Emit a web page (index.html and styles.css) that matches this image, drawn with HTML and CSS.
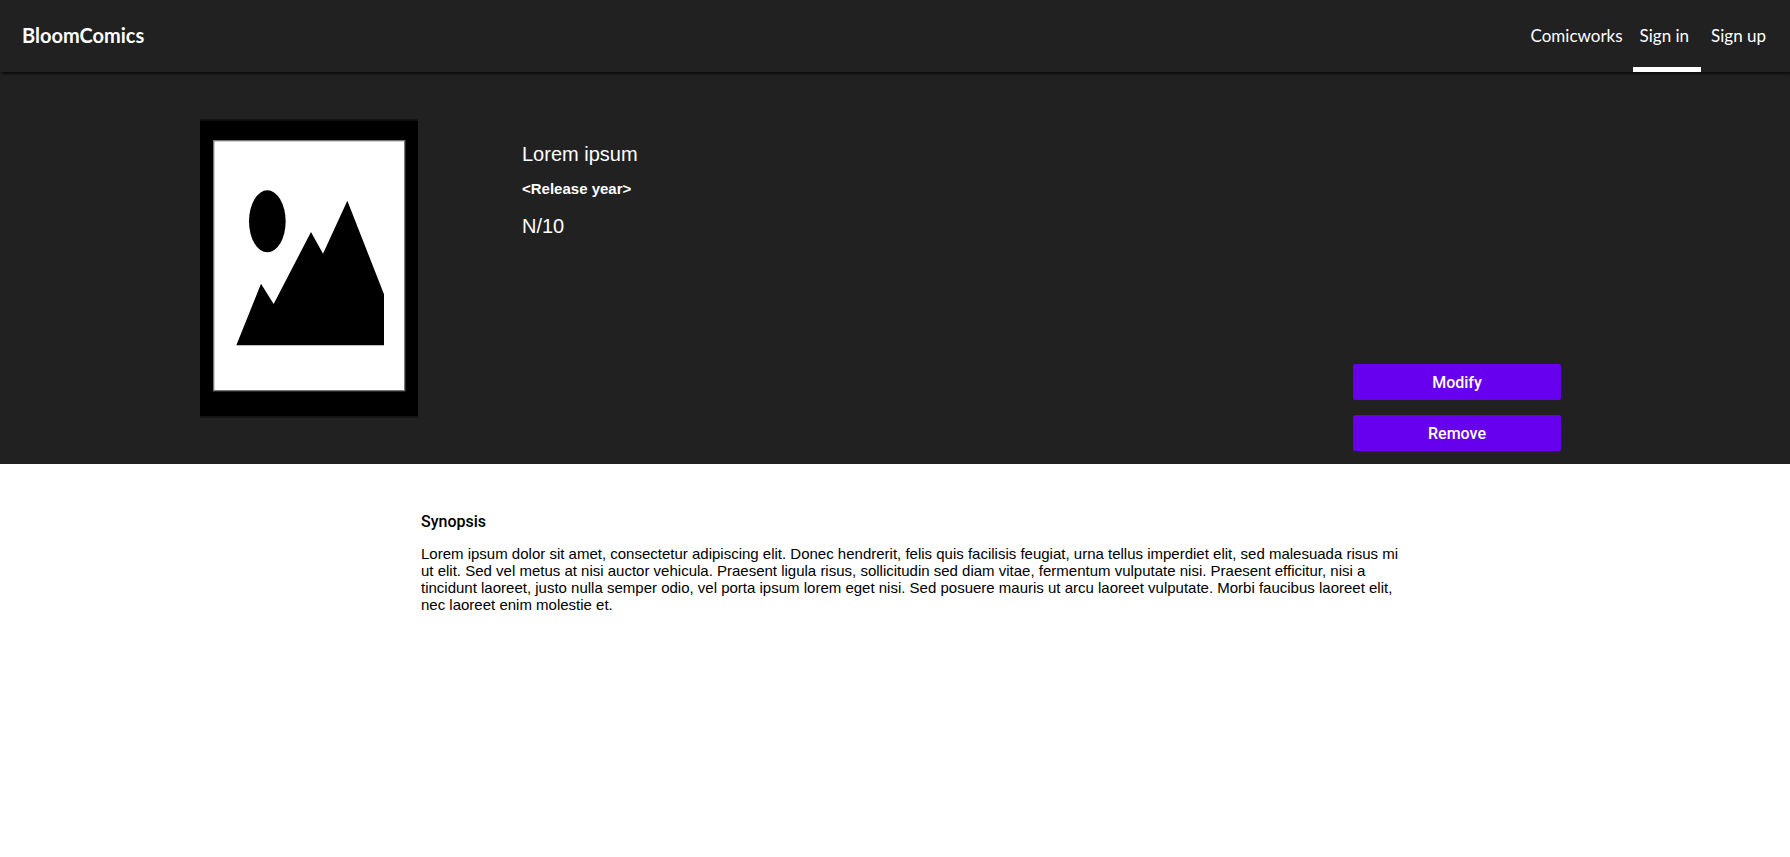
FILE: index.html
```html
<!DOCTYPE html>
<html lang="en">
<head>
<meta charset="utf-8">
<title>BloomComics</title>
<meta name="viewport" content="width=device-width, initial-scale=1">
<link rel="stylesheet" href="styles.css">
</head>
<body>
<header class="topbar">
  <a class="brand" href="#">BloomComics</a>
  <nav class="menu">
    <a class="menu-link" href="#">Comicworks</a>
    <a class="menu-link menu-link-active" href="#">Sign in</a>
    <a class="menu-link" href="#">Sign up</a>
  </nav>
</header>
<main>
  <section class="hero">
    <svg class="cover" viewBox="0 0 654 897" role="img" aria-label="Cover">
      <rect width="654" height="897" fill="#000" fill-opacity=".35"/>
      <rect y="5" width="654" height="886" fill="#000"/>
      <rect x="41" y="65" width="573" height="750" fill="#fff" stroke="#777" stroke-width="4"/>
      <ellipse cx="202" cy="307" rx="55" ry="93"/>
      <path d="M109 679 183 494 221 555 333 339 369 404 442 245 552 526V679Z"/>
    </svg>
    <div class="details">
      <h1 class="title">Lorem ipsum</h1>
      <p class="year">&lt;Release year&gt;</p>
      <p class="score">N/10</p>
    </div>
    <div class="actions">
      <button class="action" type="button">Modify</button>
      <button class="action" type="button">Remove</button>
    </div>
  </section>
  <section class="synopsis">
    <h2 class="synopsis-title">Synopsis</h2>
    <p class="synopsis-text">Lorem ipsum dolor sit amet, consectetur adipiscing elit. Donec hendrerit, felis quis facilisis feugiat, urna tellus imperdiet elit, sed malesuada risus mi ut elit. Sed vel metus at nisi auctor vehicula. Praesent ligula risus, sollicitudin sed diam vitae, fermentum vulputate nisi. Praesent efficitur, nisi a tincidunt laoreet, justo nulla semper odio, vel porta ipsum lorem eget nisi. Sed posuere mauris ut arcu laoreet vulputate. Morbi faucibus laoreet elit, nec laoreet enim molestie et.</p>
  </section>
</main>
</body>
</html>
```
FILE: styles.css
```css
* { box-sizing: border-box; }

body {
  margin: 0;
  background: #fff;
  color: #000;
  font-family: "Liberation Sans", Arial, sans-serif;
}

h1, h2, p { margin: 0; }

.topbar {
  position: relative;
  display: flex;
  justify-content: space-between;
  min-height: 72px;
  padding: 0 17px 0 22px;
  background: #212121;
  box-shadow: 2px 2px 3px rgba(0, 0, 0, .7);
  font-family: Lato, sans-serif;
}

.brand {
  align-self: center;
  padding-bottom: 2px;
  color: #fff;
  font-size: 20px;
  font-weight: 700;
  text-decoration: none;
}

.menu {
  display: flex;
  gap: 3px;
}

.menu-link {
  display: flex;
  align-items: center;
  padding: 4px 7px 0;
  border-bottom: 5px solid transparent;
  color: #fff;
  font-size: 17px;
  text-decoration: none;
}

.menu-link-active {
  padding-right: 12px;
  border-bottom-color: #fff;
}

.hero {
  display: flex;
  padding: 47px 229px 13px 200px;
  background: #212121;
  color: #fff;
}

.cover {
  width: 218px;
  height: 299px;
  flex: none;
}

.details {
  flex: 1;
  padding: 23px 0 0 104px;
}

.title, .score {
  font-size: 20px;
  font-weight: 400;
  line-height: 24px;
}

.year {
  margin: 13px 0 15px;
  font-size: 15px;
  font-weight: 700;
  line-height: 20px;
}

.actions {
  display: flex;
  flex-direction: column;
  justify-content: flex-end;
  gap: 15px;
  width: 208px;
  min-height: 332px;
}

.action {
  height: 36px;
  border: 0;
  border-radius: 2px;
  background: #6600ee;
  color: #fff;
  font: 500 16px Roboto, sans-serif;
}

.synopsis {
  max-width: 1400px;
  padding: 48px 0 0 421px;
}

.synopsis-title {
  margin-bottom: 13px;
  font: 500 16px/20px Roboto, sans-serif;
}

.synopsis-text {
  font-size: 15px;
  line-height: 17px;
}
```
